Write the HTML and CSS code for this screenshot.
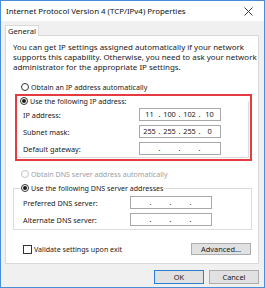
FILE: index.html
```html
<!DOCTYPE html>
<html lang="en">
<head>
  <meta charset="UTF-8" />
  <title>Internet Protocol Version 4 (TCP/IPv4) Properties</title>
  <link rel="stylesheet" href="styles.css">
</head>
<body>
  <div class="window">
    <div class="titlebar">
      <span class="title">Internet Protocol Version 4 (TCP/IPv4) Properties</span>
      <svg class="close" width="9" height="9" viewBox="0 0 9 9">
        <path d="M0.5 0.5 L8.5 8.5 M8.5 0.5 L0.5 8.5" stroke="#3a3a3a" stroke-width="1" fill="none"/>
      </svg>
    </div>

    <div class="dialog-body">
      <div class="tabs">
        <div class="tab">General</div>
      </div>

      <div class="panel">
        <p class="intro">
          You can get IP settings assigned automatically if your network<br>
          supports this capability. Otherwise, you need to ask your network<br>
          administrator for the appropriate IP settings.
        </p>

        <label class="option top-option">
          <span class="radio"></span>
          Obtain an IP address automatically
        </label>

        <!-- highlighted group -->
        <div class="highlight">
          <fieldset class="group ip-group">
            <legend>
              <label class="option">
                <span class="radio checked"></span>
                Use the following IP address:
              </label>
            </legend>
            <div class="field-row">
              <span class="field-label">IP address:</span>
              <div class="ip-input">
                <span class="octet">11</span><span class="dot">.</span>
                <span class="octet">100</span><span class="dot">.</span>
                <span class="octet">102</span><span class="dot">.</span>
                <span class="octet">10</span>
              </div>
            </div>
            <div class="field-row">
              <span class="field-label">Subnet mask:</span>
              <div class="ip-input">
                <span class="octet">255</span><span class="dot">.</span>
                <span class="octet">255</span><span class="dot">.</span>
                <span class="octet">255</span><span class="dot">.</span>
                <span class="octet">0</span>
              </div>
            </div>
            <div class="field-row">
              <span class="field-label">Default gateway:</span>
              <div class="ip-input">
                <span class="octet"></span><span class="dot">.</span>
                <span class="octet"></span><span class="dot">.</span>
                <span class="octet"></span><span class="dot">.</span>
                <span class="octet"></span>
              </div>
            </div>
          </fieldset>
        </div>

        <label class="option top-option disabled dns-auto">
          <span class="radio"></span>
          Obtain DNS server address automatically
        </label>

        <fieldset class="group dns-group">
          <legend>
            <label class="option">
              <span class="radio checked"></span>
              Use the following DNS server addresses
            </label>
          </legend>
          <div class="field-row">
            <span class="field-label">Preferred DNS server:</span>
            <div class="ip-input">
              <span class="octet"></span><span class="dot">.</span>
              <span class="octet"></span><span class="dot">.</span>
              <span class="octet"></span><span class="dot">.</span>
              <span class="octet"></span>
            </div>
          </div>
          <div class="field-row">
            <span class="field-label">Alternate DNS server:</span>
            <div class="ip-input">
              <span class="octet"></span><span class="dot">.</span>
              <span class="octet"></span><span class="dot">.</span>
              <span class="octet"></span><span class="dot">.</span>
              <span class="octet"></span>
            </div>
          </div>
        </fieldset>

        <div class="bottom-row">
          <label class="option">
            <span class="checkbox"></span>
            Validate settings upon exit
          </label>
          <button class="btn advanced">Advanced...</button>
        </div>
      </div>

      <div class="footer">
        <button class="btn btn-default">OK</button>
        <button class="btn">Cancel</button>
      </div>
    </div>
  </div>
</body>
</html>
```

FILE: styles.css
```css
body {
  margin: 0;
  font-family: 'Noto Sans', 'Open Sans', sans-serif;
  font-size: 7.4px;
  color: #1a1a1a;
  background: #ffffff;
}

.window {
  width: 265px;
  height: 288px;
  box-sizing: border-box;
  border: 1px solid #4a8fd6;
  display: flex;
  flex-direction: column;
  overflow: hidden;
}

.titlebar {
  height: 20px;
  flex-shrink: 0;
  background: #ffffff;
  display: flex;
  align-items: center;
  justify-content: space-between;
  padding: 0 11px 0 5px;
}

.title {
  font-size: 7.9px;
  color: #111111;
}

.close {
  display: block;
}

.dialog-body {
  flex: 1;
  background: #f0f0f0;
  padding: 4px 3px 4px 4px;
  display: flex;
  flex-direction: column;
}

.tabs {
  display: flex;
  height: 10px;
  position: relative;
  z-index: 1;
}

.tab {
  width: 34px;
  height: 11px;
  box-sizing: border-box;
  background: #ffffff;
  border: 1px solid #d9d9d9;
  border-bottom: none;
  text-align: center;
  line-height: 10px;
  font-size: 7.6px;
}

.panel {
  background: #ffffff;
  border: 1px solid #d9d9d9;
  margin-right: 2px;
  padding: 0 6px 8px 7px;
  display: flex;
  flex-direction: column;
}

.intro {
  margin: 6px 0 0 0;
  font-size: 7.95px;
  line-height: 10px;
  white-space: nowrap;
}

.option {
  display: flex;
  align-items: center;
  gap: 2px;
  height: 10px;
  line-height: 10px;
  font-size: 7.1px;
  white-space: nowrap;
}

.top-option {
  margin-top: 10px;
  padding-left: 8px;
}

.radio {
  width: 8px;
  height: 8px;
  box-sizing: border-box;
  border: 1px solid #333333;
  border-radius: 50%;
  background: #ffffff;
  position: relative;
  flex-shrink: 0;
}

.radio.checked::after {
  content: '';
  position: absolute;
  left: 1px;
  top: 1px;
  width: 4px;
  height: 4px;
  border-radius: 50%;
  background: #1a1a1a;
}

.disabled {
  color: #a0a0a0;
}

.disabled .radio {
  border-color: #c4c4c4;
}

.dns-auto {
  margin-top: 8px;
}

.highlight {
  margin: 2px 0 0 2px;
  border: 2px solid #e53a40;
  padding: 0 1px 1px 0;
}

.group {
  margin: 0;
  border: 1px solid #dcdcdc;
  padding: 0 0 2px 0;
  min-width: 0;
}

.group legend {
  padding: 0 1px 0 0;
  margin-left: 2px;
}

.ip-group {
  border-left-color: transparent;
  border-top-color: transparent;
}

.dns-group {
  margin-top: 4px;
  padding-bottom: 3px;
}

.dns-group legend {
  margin-left: 7px;
}

.field-row {
  display: flex;
  align-items: center;
  height: 13px;
  margin-top: 4px;
}

.ip-group .field-row:first-of-type {
  margin-top: 2px;
}

.dns-group .field-row:first-of-type {
  margin-top: 3px;
}

.ip-group .field-label {
  width: 121px;
  padding-left: 5px;
}

.dns-group .field-label {
  width: 116px;
  padding-left: 9px;
}

.field-label {
  box-sizing: border-box;
  flex-shrink: 0;
  font-size: 7.3px;
}

.ip-input {
  width: 82px;
  height: 13px;
  box-sizing: border-box;
  border: 1px solid #a8a8a8;
  background: #ffffff;
  display: flex;
  align-items: center;
  padding-left: 1px;
  line-height: 11px;
  font-size: 7.4px;
}

.octet {
  width: 17px;
  text-align: center;
}

.dot {
  width: 3px;
  text-align: center;
}

.bottom-row {
  margin-top: 13px;
  height: 12px;
  display: flex;
  align-items: center;
  justify-content: space-between;
  padding: 0 1px 0 10px;
}

.checkbox {
  width: 9px;
  height: 9px;
  box-sizing: border-box;
  border: 1px solid #333333;
  background: #ffffff;
  flex-shrink: 0;
}

.btn {
  font-family: inherit;
  font-size: 7.4px;
  color: #1a1a1a;
  background: #e1e1e1;
  border: 1px solid #adadad;
  padding: 0;
  width: 50px;
  height: 14px;
  line-height: 12px;
}

.advanced {
  width: 60px;
  height: 12px;
  line-height: 10px;
}

.btn-default {
  border-color: #2a7fd4;
}

.footer {
  margin-top: 6px;
  display: flex;
  justify-content: flex-end;
  gap: 5px;
  padding-right: 2px;
}
```
